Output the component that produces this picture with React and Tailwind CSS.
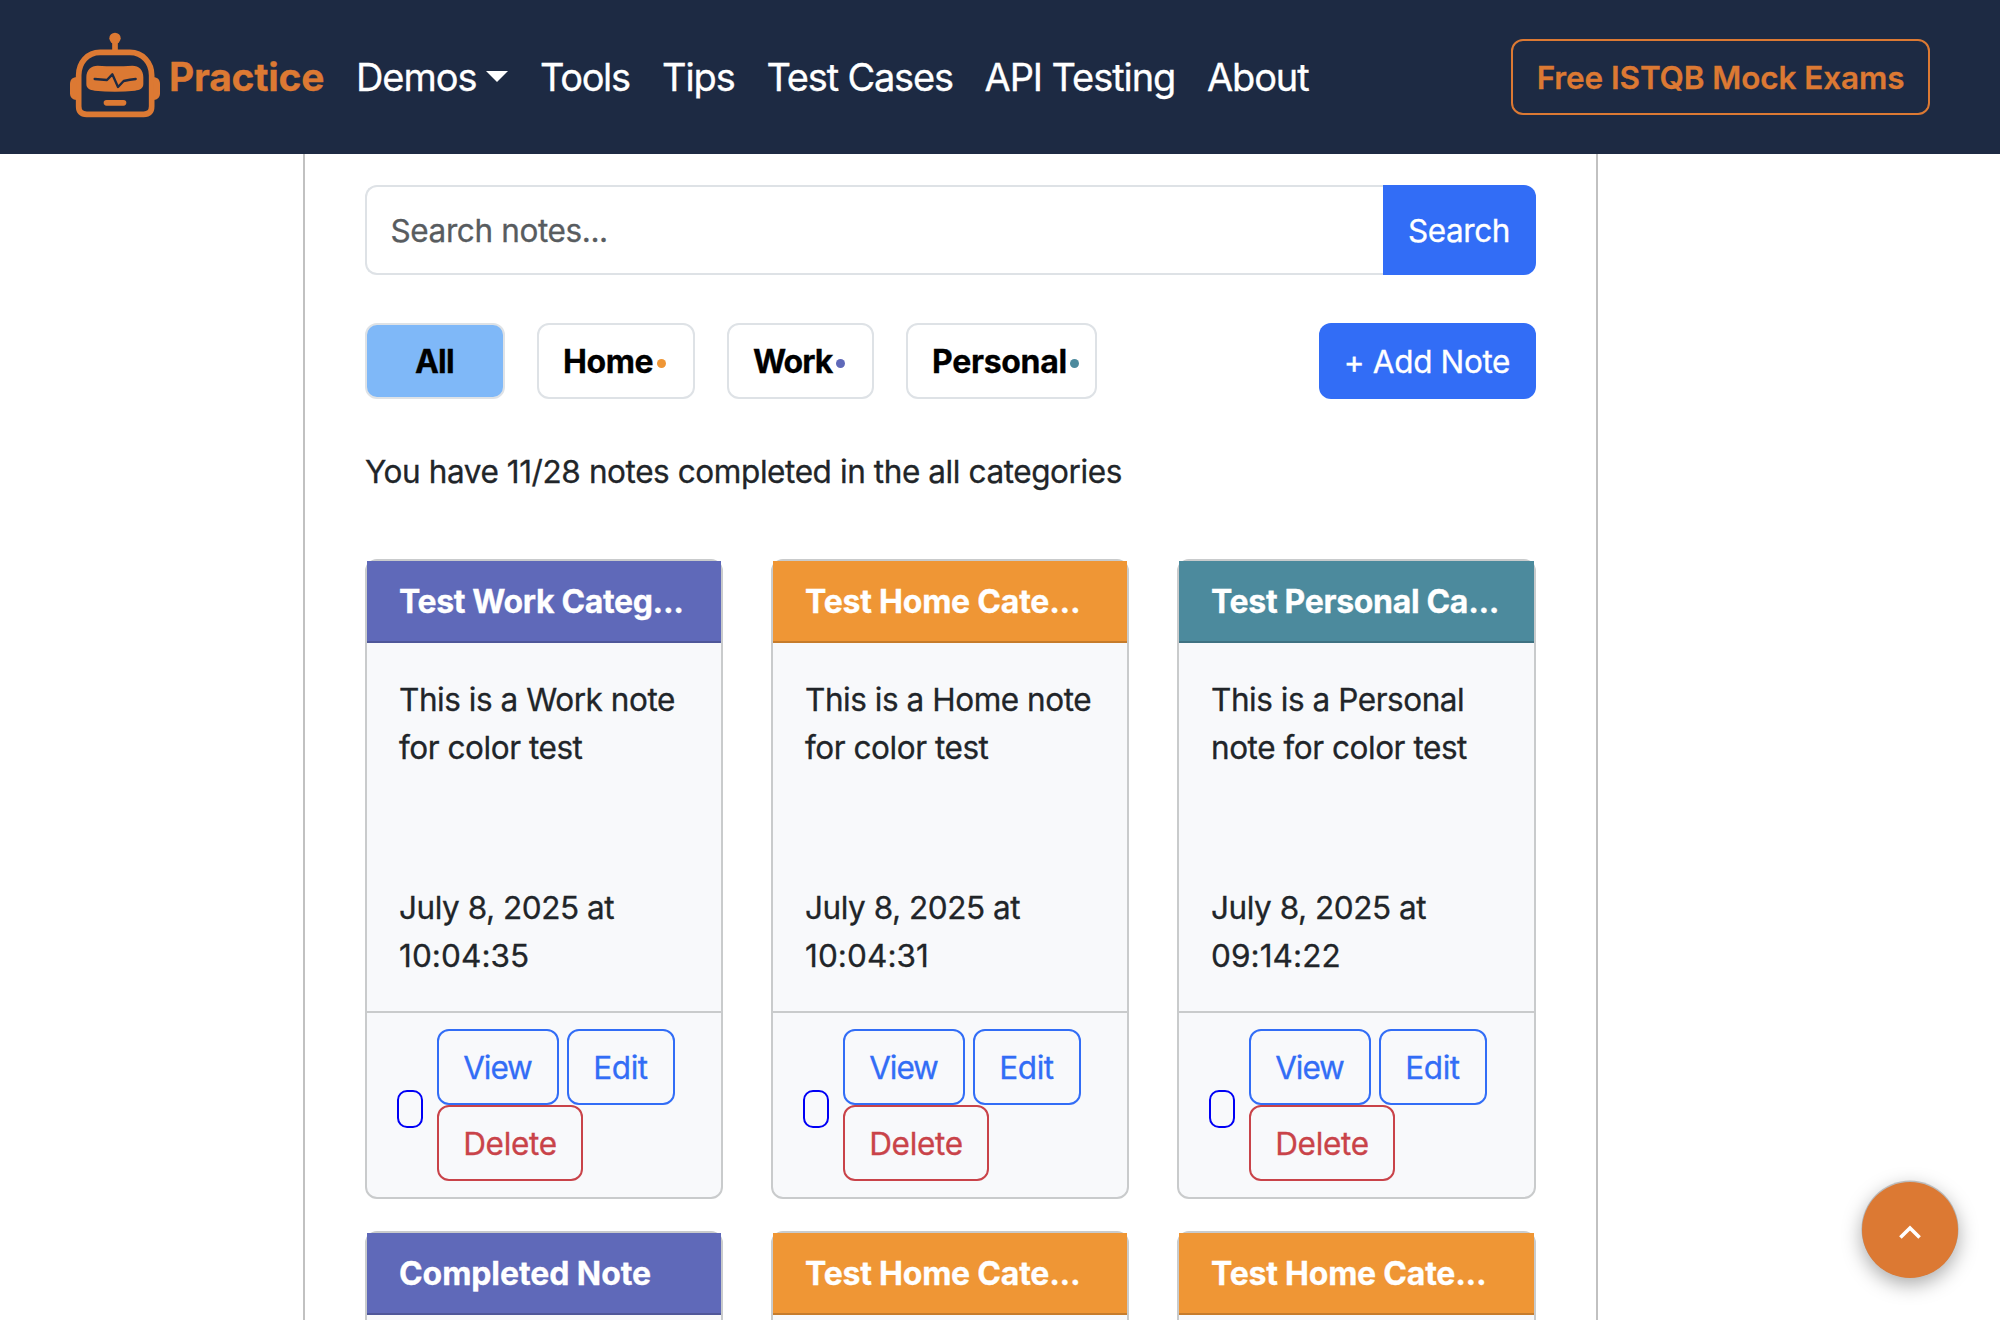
import React from "react";

const navLinks = [
  { label: "Tools", cls: "w-[122px] tracking-[-1.35px]" },
  { label: "Tips", cls: "w-[104.5px] tracking-[-1.1px]" },
  { label: "Test Cases", cls: "w-[218px] tracking-[-1.2px]" },
  { label: "API Testing", cls: "w-[222.5px] tracking-[-1.07px]" },
  { label: "About", cls: "tracking-[-1.15px]" },
];

const filters = [
  { label: "Home", cls: "w-[158px] tracking-[-0.4px]", dot: "bg-[#ef9635] ml-[4px]" },
  { label: "Work", cls: "w-[147px] tracking-[-1px]", dot: "bg-[#5f69b9] ml-[4px]" },
  { label: "Personal", cls: "w-[191px] tracking-[-0.3px]", dot: "bg-[#4c8a9d] ml-[3px]" },
];

const headerColors = {
  work: "bg-[#5f69b9] border-[#4f5799]",
  home: "bg-[#ef9635] border-[#c67c2c]",
  personal: "bg-[#4c8a9d] border-[#3f7282]",
};

const notes = [
  {
    title: "Test Work Categ...",
    kind: "work",
    track: "tracking-[-0.36px]",
    lines: ["This is a Work note", "for color test"],
    time: "10:04:35",
  },
  {
    title: "Test Home Cate...",
    kind: "home",
    track: "tracking-[-0.22px]",
    lines: ["This is a Home note", "for color test"],
    time: "10:04:31",
  },
  {
    title: "Test Personal Ca...",
    kind: "personal",
    track: "tracking-[-0.32px]",
    lines: ["This is a Personal", "note for color test"],
    time: "09:14:22",
  },
  { title: "Completed Note", kind: "work", track: "tracking-[-0.08px]" },
  { title: "Test Home Cate...", kind: "home", track: "tracking-[-0.22px]" },
  { title: "Test Home Cate...", kind: "home", track: "tracking-[-0.22px]" },
];

function RobotLogo() {
  return (
    <svg className="mb-[4px] h-[86px] w-[90px] shrink-0" viewBox="60 64 270 258" fill="none">
      <circle cx="195" cy="83" r="17" fill="#dc7933" />
      <path d="M195 92V122" stroke="#dc7933" strokeWidth="17" />
      <path
        d="M150 125H240C278 125 305 156 305 194V287Q305 311 281 311H110Q86 311 86 287V194C86 156 112 125 150 125Z"
        stroke="#dc7933"
        strokeWidth="17"
      />
      <path d="M80 200C67 200 60 208 60 220V248C60 260 67 268 80 268Z" fill="#dc7933" />
      <path d="M310 200C323 200 330 208 330 220V248C330 260 323 268 310 268Z" fill="#dc7933" />
      <path
        d="M143 165Q195 168 247 165C267 165 280 178 280 200V220C280 233 270 238 255 240Q195 246 134 240C119 238 109 233 109 220V200C109 178 123 165 143 165Z"
        fill="#dc7933"
      />
      <path
        d="M134 205Q152 207 171 208L187 191L204 229L221 211Q240 207 257 205"
        stroke="#1d2a43"
        strokeWidth="7"
        strokeLinecap="round"
        strokeLinejoin="round"
      />
      <rect x="161" y="268" width="68" height="17" rx="8.5" fill="#dc7933" />
    </svg>
  );
}

function Navbar() {
  return (
    <header className="flex h-[154px] shrink-0 items-center bg-[#1d2a43] px-[70px] text-[38px] whitespace-nowrap text-white">
      <RobotLogo />
      <span className="ml-[9px] w-[187px] shrink-0 text-[39px] font-bold tracking-[-0.24px] text-[#dc7933]">
        Practice
      </span>
      <a className="flex w-[184px] shrink-0 items-center tracking-[-1.05px]">
        Demos
        <svg className="mb-[2px] ml-[9.5px] h-[11px] w-[22px]" viewBox="0 0 22 11" fill="#fff">
          <path d="M0 0H22L11 11Z" />
        </svg>
      </a>
      {navLinks.map((l) => (
        <a key={l.label} className={"shrink-0 " + l.cls}>
          {l.label}
        </a>
      ))}
      <a className="ml-auto flex h-[76px] w-[419px] shrink-0 items-center justify-center rounded-[12px] border-2 border-[#dc7933] pt-[2px] text-[31.5px] font-semibold tracking-[-0.11px] text-[#dc7933]">
        Free ISTQB Mock Exams
      </a>
    </header>
  );
}

function NoteCard({ note }) {
  return (
    <article className="flex min-h-[120px] flex-col rounded-[12px] border-2 border-[#c9cbcc] bg-[#f8f9fb]">
      <div
        className={
          "h-[82px] border-b-2 pl-8 text-[32px] font-bold leading-[82px] whitespace-nowrap text-white " +
          headerColors[note.kind] +
          " " +
          note.track
        }
      >
        {note.title}
      </div>
      {note.lines && (
        <>
          <div className="flex h-[368px] flex-col justify-between pt-[33px] pb-[31px] pl-8 leading-[48px] whitespace-nowrap">
            <div className="tracking-[-0.45px]">
              {note.lines.map((t) => (
                <p key={t}>{t}</p>
              ))}
            </div>
            <div>
              <p className="tracking-[-0.45px]">July 8, 2025 at</p>
              <p className="tracking-[0.08px]">{note.time}</p>
            </div>
          </div>
          <div className="flex h-[186px] items-center gap-[14px] border-t-2 border-[#c9cbcc] pl-[30px]">
            <span className="mt-2 h-[38px] w-[26px] shrink-0 rounded-[10px] border-2 border-[#0000f5]" />
            <div className="flex flex-wrap gap-x-2">
              <button className="h-[76px] w-[122px] rounded-[12px] border-2 border-[#326df6] pt-[2px] pr-[1px] tracking-[-1.1px] text-[#326df6]">
                View
              </button>
              <button className="h-[76px] w-[108px] rounded-[12px] border-2 border-[#326df6] pt-[2px] pr-[1px] tracking-[-0.4px] text-[#326df6]">
                Edit
              </button>
              <button className="h-[76px] w-[146px] rounded-[12px] border-2 border-[#c94349] pt-[2px] tracking-[-0.3px] text-[#c94349]">
                Delete
              </button>
            </div>
          </div>
        </>
      )}
    </article>
  );
}

export default function App() {
  return (
    <div className="relative flex h-[1320px] w-[2000px] flex-col overflow-hidden bg-white font-['Inter',sans-serif] text-[31.5px] text-[#212529] [-webkit-text-stroke:0.3px]">
      <Navbar />
      <main className="ml-[303px] w-[1295px] flex-1 border-x-2 border-[#c1c1c1] px-[60px] pt-[31px]">
        <div className="flex h-[90px]">
          <input
            placeholder="Search notes..."
            className="min-w-0 flex-1 rounded-l-[12px] border-2 border-r-0 border-[#dee2e6] pt-[2px] pl-[23.5px] tracking-[-0.39px] placeholder:text-[#585c5f]"
          />
          <button className="w-[153px] rounded-r-[12px] bg-[#326df6] pt-[2px] pr-[1px] tracking-[-0.4px] text-white">
            Search
          </button>
        </div>
        <div className="mt-12 flex h-[76px] gap-8 text-[32px] whitespace-nowrap">
          <button className="w-[140px] rounded-[12px] border-2 border-[#dee2e6] bg-[#7fb8f8] pt-[2px] pr-[1px] font-bold tracking-[-0.7px] text-black">
            All
          </button>
          {filters.map((f) => (
            <button
              key={f.label}
              className={
                "flex items-center rounded-[12px] border-2 border-[#dee2e6] pt-[1px] pl-[24px] font-bold text-black " +
                f.cls
              }
            >
              {f.label}
              <span className={"mt-[4px] size-[9px] rounded-full " + f.dot} />
            </button>
          ))}
          <button className="ml-auto w-[217px] rounded-[12px] bg-[#326df6] pt-[2px] pr-[1px] text-[31.5px] tracking-[-0.36px] text-white">
            + Add Note
          </button>
        </div>
        <p className="mt-[49px] leading-[48px] tracking-[-0.41px]">
          You have 11/28 notes completed in the all categories
        </p>
        <div className="mt-[63px] grid grid-cols-[358px_358px_359px] gap-x-12 gap-y-8">
          {notes.map((n, i) => (
            <NoteCard key={i} note={n} />
          ))}
        </div>
      </main>
      <button className="absolute top-[1182px] left-[1862px] flex size-[96px] items-center justify-center rounded-full bg-[#dc7933] shadow-[0_-1px_0_0.5px_rgba(0,0,0,0.2),0_6px_20px_rgba(0,0,0,0.35)]">
        <svg className="mt-[3px] h-[16px] w-[24px]" viewBox="0 0 24 16" fill="none" stroke="#fff" strokeWidth="3.6">
          <path d="M2.4 13.6L12 4L21.6 13.6" />
        </svg>
      </button>
    </div>
  );
}
